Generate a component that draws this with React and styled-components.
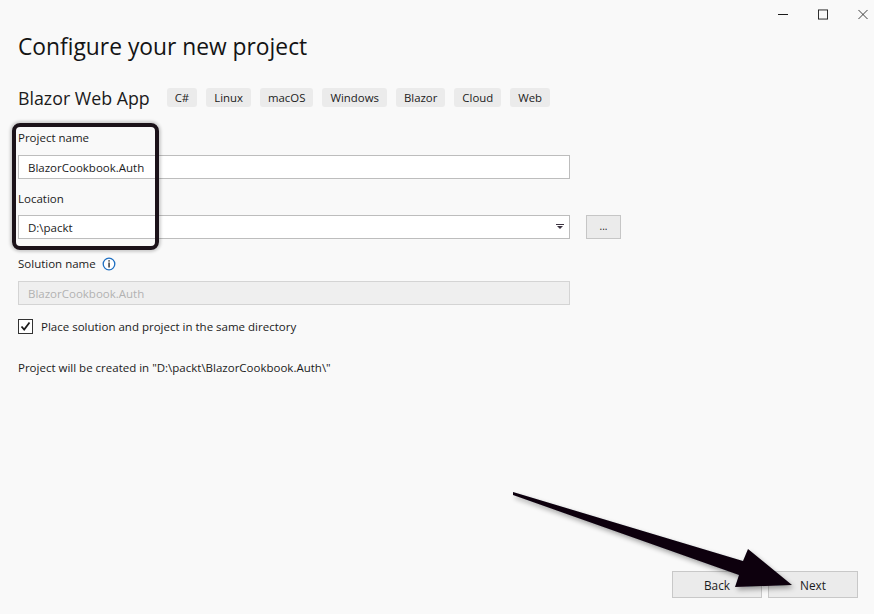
import React from "react";
import styled, { createGlobalStyle } from "styled-components";

const GlobalStyle = createGlobalStyle`
  html, body { margin: 0; padding: 0; background: #f9f9f9; }
  * { box-sizing: border-box; }
`;

const FONT = `"Open Sans", "Noto Sans", "Liberation Sans", sans-serif`;

const Window = styled.div`
  position: relative;
  width: 874px;
  height: 614px;
  background: #f9f9f9;
  font-family: ${FONT};
  color: #1b1b1b;
  display: flex;
  flex-direction: column;
  overflow: hidden;
`;

const TitleBar = styled.div`
  height: 28px;
  display: flex;
  justify-content: flex-end;
  align-items: center;
  gap: 30px;
  padding: 0 6px 0 0;
`;

const CaptionButton = styled.div`
  width: 10px;
  height: 28px;
  display: flex;
  align-items: center;
  justify-content: center;
`;

const Content = styled.div`
  padding: 0 18px;
  display: flex;
  flex-direction: column;
`;

const Heading = styled.h1`
  margin: 5px 0 0 0;
  font-size: 22.8px;
  line-height: 28px;
  font-weight: 400;
  color: #141414;
`;

const TemplateRow = styled.div`
  margin-top: 27px;
  height: 19px;
  display: flex;
  align-items: center;
`;

const TemplateName = styled.span`
  font-size: 17.8px;
  margin-right: 17px;
  color: #1b1b1b;
`;

const Tags = styled.div`
  display: flex;
  gap: 9px;
`;

const Tag = styled.span`
  height: 19px;
  padding: 0 8px;
  background: #ebebeb;
  border-radius: 3px;
  font-size: 11.4px;
  line-height: 19px;
  color: #1b1b1b;
`;

const Label = styled.div`
  margin-top: ${(p) => p.$mt}px;
  height: 16px;
  line-height: 16px;
  font-size: 11.5px;
  display: flex;
  align-items: center;
  gap: 6px;
  color: #1b1b1b;
`;

const FieldRow = styled.div`
  margin-top: ${(p) => p.$mt}px;
  display: flex;
  align-items: center;
  gap: 16px;
`;

const TextBox = styled.div`
  width: 552px;
  height: 24px;
  border: 1px solid ${(p) => (p.$disabled ? "#d4d4d4" : "#bdbdbd")};
  background: ${(p) => (p.$disabled ? "#efefef" : "#ffffff")};
  color: ${(p) => (p.$disabled ? "#b2b2b2" : "#1b1b1b")};
  font-size: 11.5px;
  display: flex;
  align-items: center;
  justify-content: space-between;
  padding: 0 5px 0 9px;
`;

const BrowseButton = styled.div`
  width: 35px;
  height: 24px;
  border: 1px solid #c6c6c6;
  background: #ebebeb;
  display: flex;
  align-items: center;
  justify-content: center;
  font-size: 10px;
  line-height: 1;
  padding-bottom: 2px;
`;

const CheckRow = styled.div`
  margin-top: 13px;
  display: flex;
  align-items: center;
  gap: 8px;
  font-size: 11.5px;
  height: 16px;
`;

const CheckBox = styled.div`
  width: 15px;
  height: 15px;
  border: 1px solid #333;
  background: #fff;
  display: flex;
  align-items: center;
  justify-content: center;
`;

const Note = styled.div`
  margin-top: 26px;
  font-size: 11.5px;
  line-height: 16px;
`;

const Footer = styled.div`
  margin-top: auto;
  display: flex;
  justify-content: flex-end;
  gap: 6px;
  padding: 0 16px 16px 0;
`;

const Button = styled.div`
  width: 90px;
  height: 27px;
  border: 1px solid #c8c8c8;
  background: #ebebeb;
  font-size: 11.8px;
  display: flex;
  align-items: center;
  justify-content: center;
  color: #1b1b1b;
`;

const Highlight = styled.div`
  position: absolute;
  left: 12px;
  top: 123px;
  width: 147px;
  height: 127px;
  border: 4px solid #1b1219;
  border-radius: 8px;
  box-shadow: 0 0 3px 2px rgba(0, 0, 0, 0.18);
  pointer-events: none;
`;

const Overlay = styled.svg`
  position: absolute;
  left: 0;
  top: 0;
  width: 874px;
  height: 614px;
  pointer-events: none;
`;

const InfoIcon = () => (
  <svg width="14" height="14" viewBox="0 0 14 14">
    <circle cx="7" cy="7" r="5.8" fill="#fff" stroke="#1e6fc2" strokeWidth="1.3" />
    <rect x="6.4" y="3.2" width="1.3" height="1.4" fill="#1b1b1b" />
    <rect x="6.4" y="5.5" width="1.3" height="5" fill="#1b1b1b" />
  </svg>
);

const DropArrow = () => (
  <svg width="8" height="6" viewBox="0 0 8 6">
    <rect x="0" y="0" width="8" height="1" fill="#3c3340" />
    <path d="M1 2 L7 2 L4 5 Z" fill="#3c3340" />
  </svg>
);

export default function App() {
  return (
    <>
      <GlobalStyle />
      <Window>
        <TitleBar>
          <CaptionButton>
            <svg width="10" height="10" viewBox="0 0 10 10">
              <rect x="0" y="5" width="10" height="1" fill="#1b1b1b" />
            </svg>
          </CaptionButton>
          <CaptionButton>
            <svg width="11" height="11" viewBox="0 0 11 11">
              <rect x="0.5" y="0.5" width="10" height="10" fill="none" stroke="#1b1b1b" strokeWidth="1" />
            </svg>
          </CaptionButton>
          <CaptionButton>
            <svg width="11" height="11" viewBox="0 0 11 11">
              <path d="M0.5 0.5 L10.5 10.5 M10.5 0.5 L0.5 10.5" stroke="#2b2b2b" strokeWidth="1" />
            </svg>
          </CaptionButton>
        </TitleBar>
        <Content>
          <Heading>Configure your new project</Heading>
          <TemplateRow>
            <TemplateName>Blazor Web App</TemplateName>
            <Tags>
              {["C#", "Linux", "macOS", "Windows", "Blazor", "Cloud", "Web"].map((t) => (
                <Tag key={t}>{t}</Tag>
              ))}
            </Tags>
          </TemplateRow>

          <Label $mt={23}>Project name</Label>
          <FieldRow $mt={9}>
            <TextBox>BlazorCookbook.Auth</TextBox>
          </FieldRow>

          <Label $mt={12}>Location</Label>
          <FieldRow $mt={8}>
            <TextBox>
              <span>D:\packt</span>
              <DropArrow />
            </TextBox>
            <BrowseButton>...</BrowseButton>
          </FieldRow>

          <Label $mt={17}>
            Solution name <InfoIcon />
          </Label>
          <FieldRow $mt={9}>
            <TextBox $disabled>BlazorCookbook.Auth</TextBox>
          </FieldRow>

          <CheckRow>
            <CheckBox>
              <svg width="11" height="11" viewBox="0 0 11 11">
                <path d="M1.5 5.5 L4.2 8.5 L9.5 1.5" fill="none" stroke="#1b1b1b" strokeWidth="1.8" />
              </svg>
            </CheckBox>
            <span>Place solution and project in the same directory</span>
          </CheckRow>

          <Note>Project will be created in "D:\packt\BlazorCookbook.Auth\"</Note>
        </Content>

        <Footer>
          <Button>Back</Button>
          <Button>Next</Button>
        </Footer>

        <Highlight />
        <Overlay viewBox="0 0 874 614">
          <defs>
            <filter id="arrowShadow" x="-10%" y="-10%" width="120%" height="130%">
              <feGaussianBlur in="SourceAlpha" stdDeviation="2.5" />
              <feOffset dx="2" dy="3" result="b" />
              <feComponentTransfer>
                <feFuncA type="linear" slope="0.35" />
              </feComponentTransfer>
              <feMerge>
                <feMergeNode />
                <feMergeNode in="SourceGraphic" />
              </feMerge>
            </filter>
          </defs>
          <path
            d="M513 492 L743 561 L748 549 L792 585 L735 587 L739 575 L513 495 Z"
            fill="#0c0610"
            filter="url(#arrowShadow)"
          />
        </Overlay>
      </Window>
    </>
  );
}
